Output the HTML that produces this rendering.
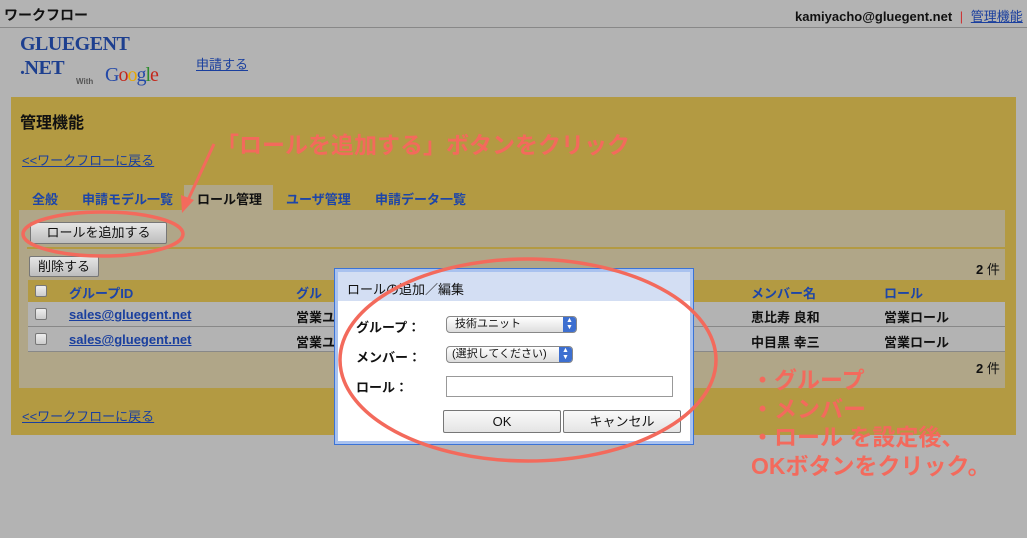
<!DOCTYPE html>
<html><head><meta charset="utf-8"><style>
*{margin:0;padding:0;box-sizing:border-box}
body{width:1027px;height:538px;background:#b3b3b3;font-family:"Liberation Sans","Noto Sans CJK JP",sans-serif;font-size:13px;color:#111;position:relative;overflow:hidden}
.a{position:absolute;white-space:nowrap}
.lnk{color:#1a3f9e;text-decoration:underline}
.b{font-weight:bold}
.blue{color:#1d45a8;font-weight:bold}
.btn{position:absolute;background:linear-gradient(#e6e6e6,#bdbdbd);border:1px solid #777;border-radius:2px;text-align:center;font-size:13px}
.red{color:#f36a5c;font-weight:bold}
.cb{position:absolute;width:12px;height:12px;border:1px solid #777;border-radius:2px;background:linear-gradient(#eee,#ccc)}
</style></head><body>
<div class="a b" style="left:4px;top:5px;font-size:14px">ワークフロー</div>
<div class="a" style="left:795px;top:6px;font-size:13px"><b>kamiyacho@gluegent.net</b> <span style="color:#c33;margin:0 4px">|</span> <span class="lnk">管理機能</span></div>
<div class="a" style="left:0;top:27px;width:1027px;height:1px;background:#888"></div>
<div class="a" style="left:20px;top:32px;font-family:'Liberation Serif',serif;font-weight:bold;font-size:20px;line-height:24px;color:#1d3f8f;letter-spacing:-0.5px">GLUEGENT<br>.NET</div>
<div class="a" style="left:76px;top:77px;font-size:8px;font-weight:bold;color:#555">With</div>
<div class="a" style="left:105px;top:64px;font-family:'Liberation Serif',serif;font-size:20px;letter-spacing:-1px"><span style="color:#2348a8">G</span><span style="color:#c4271b">o</span><span style="color:#e7a800">o</span><span style="color:#2348a8">g</span><span style="color:#2c8a2c">l</span><span style="color:#c4271b">e</span></div>
<div class="a lnk" style="left:196px;top:54px">申請する</div>
<div class="a" style="left:11px;top:97px;width:1005px;height:338px;background:#b39a42"></div>
<div class="a b" style="left:20px;top:109px;font-size:16px">管理機能</div>
<div class="a lnk" style="left:22px;top:150px">&lt;&lt;ワークフローに戻る</div>
<div class="a blue" style="left:32px;top:189px">全般</div>
<div class="a blue" style="left:82px;top:189px">申請モデル一覧</div>
<div class="a" style="left:184px;top:185px;width:89px;height:26px;background:#b0a688"></div>
<div class="a b" style="left:197px;top:189px">ロール管理</div>
<div class="a blue" style="left:286px;top:189px">ユーザ管理</div>
<div class="a blue" style="left:375px;top:189px">申請データ一覧</div>
<div class="a" style="left:19px;top:210px;width:986px;height:178px;background:#b0a688"></div>
<div class="btn" style="left:30px;top:222px;width:137px;height:22px;line-height:20px">ロールを追加する</div>
<div class="a" style="left:27px;top:247px;width:978px;height:2px;background:#b39a42"></div>
<div class="btn" style="left:29px;top:256px;width:70px;height:21px;line-height:19px">削除する</div>
<div class="a b" style="left:976px;top:259px">2 <span style="font-weight:normal">件</span></div>
<div class="a" style="left:28px;top:280px;width:977px;height:22px;background:#b39a42"></div>
<div class="a" style="left:28px;top:302px;width:977px;height:50px;background:#b3b3b3"></div>
<div class="a" style="left:28px;top:326px;width:977px;height:1px;background:#888"></div>
<div class="a" style="left:28px;top:351px;width:977px;height:1px;background:#888"></div>
<div class="cb" style="left:35px;top:285px"></div>
<div class="cb" style="left:35px;top:308px"></div>
<div class="cb" style="left:35px;top:333px"></div>
<div class="a blue" style="left:69px;top:283px">グループID</div>
<div class="a blue" style="left:296px;top:283px">グル</div>
<div class="a blue" style="left:751px;top:283px">メンバー名</div>
<div class="a blue" style="left:884px;top:283px">ロール</div>
<div class="a lnk b" style="left:69px;top:307px">sales@gluegent.net</div>
<div class="a lnk b" style="left:69px;top:332px">sales@gluegent.net</div>
<div class="a b" style="left:296px;top:307px">営業ユ</div>
<div class="a b" style="left:296px;top:332px">営業ユ</div>
<div class="a b" style="left:751px;top:307px">恵比寿 良和</div>
<div class="a b" style="left:751px;top:332px">中目黒 幸三</div>
<div class="a b" style="left:884px;top:307px">営業ロール</div>
<div class="a b" style="left:884px;top:332px">営業ロール</div>
<div class="a b" style="left:976px;top:358px">2 <span style="font-weight:normal">件</span></div>
<div class="a lnk" style="left:22px;top:406px">&lt;&lt;ワークフローに戻る</div>
<!-- dialog -->
<div class="a" style="left:334px;top:268px;width:360px;height:177px;background:#a9c2ef;border:1px solid #3b73d6"></div>
<div class="a" style="left:338px;top:272px;width:352px;height:169px;background:#fff"></div>
<div class="a" style="left:338px;top:272px;width:352px;height:29px;background:#d3def3"></div>
<div class="a" style="left:347px;top:279px">ロールの追加／編集</div>
<div class="a b" style="left:356px;top:317px">グループ：</div>
<div class="a b" style="left:356px;top:347px">メンバー：</div>
<div class="a b" style="left:356px;top:377px">ロール：</div>
<div class="a" style="left:446px;top:316px;width:131px;height:17px;border:1px solid #888;border-radius:4px;background:linear-gradient(#fff,#ddd);font-size:11px;line-height:15px;padding-left:8px">技術ユニット<span style="position:absolute;right:0;top:0;width:13px;height:15px;background:#3d6fd0;color:#fff;font-size:7px;line-height:7px;text-align:center;border-radius:0 3px 3px 0">▲<br>▼</span></div>
<div class="a" style="left:446px;top:346px;width:127px;height:17px;border:1px solid #888;border-radius:4px;background:linear-gradient(#fff,#ddd);font-size:11px;line-height:15px;padding-left:5px">(選択してください)<span style="position:absolute;right:0;top:0;width:13px;height:15px;background:#3d6fd0;color:#fff;font-size:7px;line-height:7px;text-align:center;border-radius:0 3px 3px 0">▲<br>▼</span></div>
<div class="a" style="left:446px;top:376px;width:227px;height:21px;border:1px solid #999;background:#fff"></div>
<div class="btn" style="left:443px;top:410px;width:118px;height:23px;line-height:21px;background:linear-gradient(#fafafa,#e4e4e4)">OK</div>
<div class="btn" style="left:563px;top:410px;width:118px;height:23px;line-height:21px;background:linear-gradient(#fafafa,#e4e4e4)">キャンセル</div>
<!-- annotations -->
<svg class="a" style="left:0;top:0" width="1027" height="538">
<ellipse cx="103" cy="234" rx="80" ry="22" fill="none" stroke="#f36a5c" stroke-width="3.5"/>
<ellipse cx="528" cy="360" rx="188" ry="101" fill="none" stroke="#f36a5c" stroke-width="3.5"/>
<line x1="214" y1="144" x2="188" y2="200" stroke="#f36a5c" stroke-width="3"/>
<polygon points="182,213 181,195 194,200" fill="#f36a5c"/>
</svg>
<div class="a red" style="left:216px;top:126px;font-size:23px">「ロールを追加する」ボタンをクリック</div>
<div class="a red" style="left:751px;top:366px;font-size:23px;line-height:28.5px">・グループ<br>・メンバー<br>・ロール を設定後、<br>OKボタンをクリック。</div>
</body></html>
